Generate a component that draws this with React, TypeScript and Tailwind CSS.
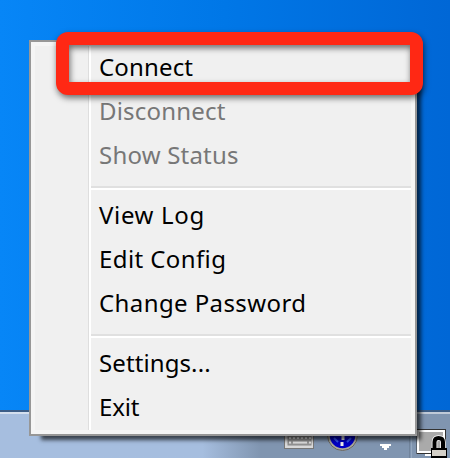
type Item = { label: string; disabled?: boolean; tracking: string };

const groups: Item[][] = [
  [
    { label: "Connect", tracking: "tracking-[0.15px]" },
    { label: "Disconnect", disabled: true, tracking: "tracking-[0.2px]" },
    { label: "Show Status", disabled: true, tracking: "tracking-[0.2px]" },
  ],
  [
    { label: "View Log", tracking: "tracking-[0.65px]" },
    { label: "Edit Config", tracking: "tracking-[0.4px]" },
    { label: "Change Password", tracking: "tracking-[0.4px]" },
  ],
  [
    { label: "Settings...", tracking: "tracking-[0.1px]" },
    { label: "Exit", tracking: "tracking-[-0.2px]" },
  ],
];

function Group({ items, divided }: { items: Item[]; divided: boolean }) {
  return (
    <>
      {divided && (
        <div className="h-4 pt-2 pl-14">
          <div className="h-1 w-full border-t-2 border-b-2 border-t-[#e0e0e0] border-b-white" />
        </div>
      )}
      {items.map((item) => (
        <div
          key={item.label}
          className={`flex h-11 items-center pb-0.5 pl-16 text-[24px] leading-none whitespace-nowrap ${item.tracking} ${item.disabled ? "text-[#777]" : "text-black"}`}
        >
          {item.label}
        </div>
      ))}
    </>
  );
}

function Tray() {
  return (
    <svg className="ml-auto block" width="180" height="44" viewBox="270 414 180 44">
      <rect x="284.500" y="426.500" width="29" height="22" fill="#d8d8d8" stroke="#777" />
      <rect x="288" y="430" width="23" height="15" fill="#999" stroke="#888" />
      <path d="M289 438H311" stroke="#e4e4e4" strokeWidth="2" strokeDasharray="2 2" />
      <path d="M289 442.500H291M293 442.500H307M309 442.500H311" stroke="#e4e4e4" strokeWidth="2" />
      <circle cx="342.500" cy="435.500" r="14" fill="#0000c5" stroke="#aaa89a" strokeWidth="2.500" />
      <circle cx="342.500" cy="435.500" r="15" fill="none" stroke="#666" />
      <path d="M343 435v5M342 442v4" stroke="#eee" strokeWidth="3" />
      <path d="M334 438l4 4M351 438l-4 4" stroke="#3555ff" strokeWidth="2" />
      <path d="M380 444H391V446H389V448H387V450H384V448H382V446H380Z" fill="#fff" />
      <path d="M409.500 414V458" stroke="#71849c" />
      <path d="M411.500 414V458" stroke="#94a8c0" />
      <rect x="416.500" y="429" width="29.500" height="25" fill="#333" />
      <rect x="418" y="431" width="26" height="21" fill="#aaa" stroke="#fff" strokeWidth="2" />
      <path d="M425 455H433" stroke="#fff" strokeWidth="2" />
      <path d="M434.500 449V442Q434.500 438 438.500 438Q443 438 443 442V449" fill="none" stroke="#fff" strokeWidth="5.500" />
      <path d="M434.500 449V442Q434.500 438 438.500 438Q443 438 443 442V449" fill="none" stroke="#000" strokeWidth="4" />
      <rect x="431" y="448" width="16" height="10" fill="#000" />
      <rect x="432" y="450" width="14" height="6" fill="#d4d0c8" />
    </svg>
  );
}

export default function App() {
  return (
    <div className="relative flex h-[458px] w-[450px] flex-col overflow-hidden bg-linear-to-r from-[#0786f7] via-[#0077e7] to-[#0067d6] font-['Noto_Sans','Open_Sans',sans-serif]">
      <div className="mt-auto flex h-12 w-full shrink-0 flex-col border-t-2 border-[#3b5d87] bg-linear-to-r from-[#a6bedf] from-45% to-[#8095b0] to-58%">
        <div className="h-0.5 shrink-0 bg-white/50" />
        <Tray />
      </div>

      <div className="absolute top-10 left-[29px] h-[396px] w-[388px] border-2 border-[#979797] bg-[#f0f0f0] p-1 shadow-[8px_8px_4px_-4px_rgba(0,0,0,0.65)] ring-4 ring-[#f5f5f5] ring-inset">
        <div className="relative h-full">
          <div className="absolute top-0 bottom-0 left-[53px] w-[3px] border-r-2 border-l border-l-[#dedede] border-r-white" />
          {groups.map((items, i) => (
            <Group key={i} items={items} divided={i > 0} />
          ))}
        </div>
      </div>

      <div className="absolute top-8 left-14 h-[63px] w-[367px] rounded-xl border-[13px] border-[#ff2814] drop-shadow-[1px_3px_3px_rgba(0,0,0,0.55)]" />
    </div>
  );
}
